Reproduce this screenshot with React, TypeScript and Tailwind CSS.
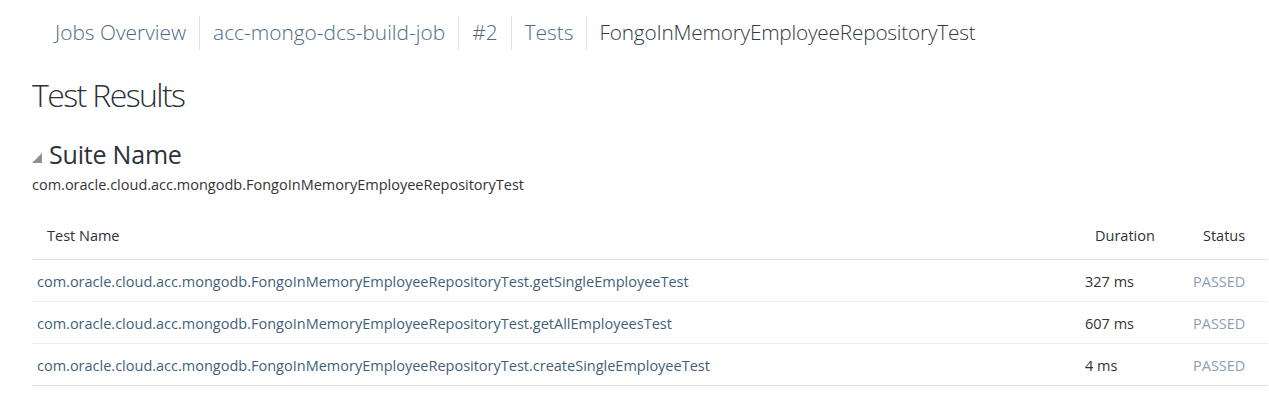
import React from "react";

const crumbs = ["Jobs Overview", "acc-mongo-dcs-build-job", "#2", "Tests"];
const rows = [
  { name: "com.oracle.cloud.acc.mongodb.FongoInMemoryEmployeeRepositoryTest.getSingleEmployeeTest", d: "327 ms" },
  { name: "com.oracle.cloud.acc.mongodb.FongoInMemoryEmployeeRepositoryTest.getAllEmployeesTest", d: "607 ms" },
  { name: "com.oracle.cloud.acc.mongodb.FongoInMemoryEmployeeRepositoryTest.createSingleEmployeeTest", d: "4 ms" },
];

export default function App() {
  return (
    <div className="w-[1269px] h-[414px] bg-white pl-[32px] pr-[1px] text-[#333]" style={{ fontFamily: '"Open Sans", "Noto Sans", sans-serif' }}>
      <nav className="flex items-center h-[34px] mt-[16px] pl-[10px]">
        {crumbs.map((c) => (
          <div key={c} className="h-[34px] flex items-center px-[13px] border-r border-[#dfe3e6] text-[20.9px] font-light text-[#4e6b84]">
            {c}
          </div>
        ))}
        <div className="h-[34px] flex items-center px-[12px] text-[20.8px] font-light text-[#2f3a44] tracking-[-0.2px]">
          FongoInMemoryEmployeeRepositoryTest
        </div>
      </nav>
      <h1 className="mt-[25px] h-[40px] leading-[40px] text-[32px] font-light text-[#2c3238] tracking-[-1.6px]">Test Results</h1>
      <div className="mt-[25px] h-[30px] flex items-center">
        <svg width="10" height="10" viewBox="0 0 10 10" className="mr-[7px] mt-[5px]">
          <polygon points="10,0 10,10 0,10" fill="#8a9299" />
        </svg>
        <span className="text-[25px] text-[#2c3238] tracking-[-0.2px]">Suite Name</span>
      </div>
      <div className="mt-[5px] h-[20px] leading-[20px] text-[14.5px] text-[#333]">com.oracle.cloud.acc.mongodb.FongoInMemoryEmployeeRepositoryTest</div>
      <table className="mt-[20px] w-full border-collapse text-[14.5px]">
        <thead>
          <tr className="h-[44px] border-b border-[#dde2e5]">
            <th className="text-left font-normal pl-[15px] pb-[1px] text-[#2c3238]">Test Name</th>
            <th className="w-[108px] text-left font-normal pl-[15px] pb-[1px] text-[#2c3238]">Duration</th>
            <th className="w-[80px] text-left font-normal pl-[15px] pb-[1px] text-[#2c3238]">Status</th>
          </tr>
        </thead>
        <tbody>
          {rows.map((r, i) => (
            <tr key={i} className={`h-[42px] border-b ${i === rows.length - 1 ? "border-[#dde2e5]" : "border-[#e6eef0]"}`}>
              <td className="pl-[5px] pt-[3px] text-[#3f5f7c]">{r.name}</td>
              <td className="pl-[5px] pt-[3px] text-[#333]">{r.d}</td>
              <td className="pl-[5px] pt-[3px] text-[#8aa0b2]">PASSED</td>
            </tr>
          ))}
        </tbody>
      </table>
    </div>
  );
}
